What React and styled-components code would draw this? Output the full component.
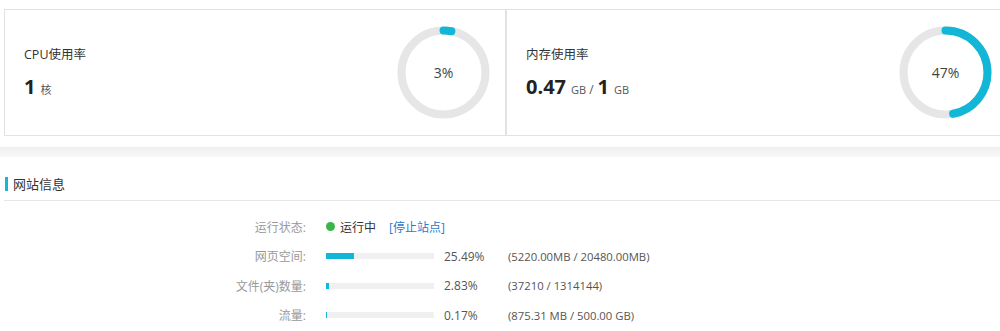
import React from 'react';
import styled, { createGlobalStyle } from 'styled-components';

const GlobalStyle = createGlobalStyle`
  html, body {
    margin: 0;
    padding: 0;
    background: #fff;
    overflow: hidden;
  }
  body {
    font-family: "Open Sans", "Noto Sans CJK SC", sans-serif;
    color: #333;
  }
`;

const ACCENT = '#12b6d6';

const Donut = ({ percent }) => {
  const r = 42;
  const c = 2 * Math.PI * r;
  return (
    <Ring>
      <svg width='93' height='93' viewBox='0 0 93 93'>
        <circle cx='46.5' cy='46.5' r={r} fill='none' stroke='#e6e6e6' strokeWidth='8' />
        <circle
          cx='46.5'
          cy='46.5'
          r={r}
          fill='none'
          stroke={ACCENT}
          strokeWidth='8'
          strokeLinecap='round'
          strokeDasharray={`${(c * percent) / 100} ${c}`}
          transform='rotate(-90 46.5 46.5)'
        />
      </svg>
      <RingLabel>{percent}%</RingLabel>
    </Ring>
  );
};

const UsageBar = ({ percent, text, detail }) => (
  <BarLine>
    <Track>
      <Fill style={{ width: `${Math.max(percent, 1)}%` }} />
    </Track>
    <Percent>{text}</Percent>
    <Detail>{detail}</Detail>
  </BarLine>
);

const App = () => {
  return (
    <>
      <GlobalStyle />
      <Top>
        <Card>
          <Stat>
            <StatTitle>CPU使用率</StatTitle>
            <StatValue>
              <Big>1</Big>
              <Unit>核</Unit>
            </StatValue>
          </Stat>
          <Donut percent={3} />
        </Card>
        <Card>
          <Stat>
            <StatTitle>内存使用率</StatTitle>
            <StatValue>
              <Big>0.47</Big>
              <Unit>GB</Unit>
              <Slash>/</Slash>
              <Big>1</Big>
              <Unit>GB</Unit>
            </StatValue>
          </Stat>
          <Donut percent={47} />
        </Card>
      </Top>
      <Shade />
      <Section>
        <SectionHead>网站信息</SectionHead>
        <InfoGrid>
          <Label>运行状态:</Label>
          <Value>
            <Dot />
            <span>运行中</span>
            <Link href='#'>[停止站点]</Link>
          </Value>
          <Label>网页空间:</Label>
          <Value>
            <UsageBar percent={25.49} text='25.49%' detail='(5220.00MB / 20480.00MB)' />
          </Value>
          <Label>文件(夹)数量:</Label>
          <Value>
            <UsageBar percent={2.83} text='2.83%' detail='(37210 / 1314144)' />
          </Value>
          <Label>流量:</Label>
          <Value>
            <UsageBar percent={0.17} text='0.17%' detail='(875.31 MB / 500.00 GB)' />
          </Value>
        </InfoGrid>
      </Section>
    </>
  );
};

export default App;

const Top = styled.div`
  display: flex;
  width: 1010px;
  padding: 9px 0 11px 4px;
`;

const Card = styled.div`
  box-sizing: border-box;
  width: 502px;
  height: 127px;
  border: 1px solid #e2e2e2;
  display: flex;
  align-items: center;
  justify-content: space-between;
  padding: 0 15px 0 19px;
`;

const Stat = styled.div`
  display: flex;
  flex-direction: column;
  margin-top: 1px;
`;

const StatTitle = styled.div`
  font-size: 12.5px;
  color: #333;
  line-height: 18px;
`;

const StatValue = styled.div`
  display: flex;
  align-items: baseline;
  margin-top: 12px;
  line-height: 22px;
`;

const Big = styled.span`
  font-size: 20px;
  font-weight: 700;
  color: #222;
`;

const Unit = styled.span`
  font-size: 11px;
  color: #555;
  margin-left: 5px;
`;

const Slash = styled.span`
  font-size: 12px;
  color: #555;
  margin: 0 4px 0 3px;
`;

const Ring = styled.div`
  position: relative;
  width: 93px;
  height: 93px;
  svg {
    display: block;
  }
`;

const RingLabel = styled.div`
  position: absolute;
  inset: 0;
  display: flex;
  align-items: center;
  justify-content: center;
  font-size: 14px;
  color: #444;
`;

const Shade = styled.div`
  height: 10px;
  background: linear-gradient(#efefef, #f8f8f8);
`;

const Section = styled.div`
  padding: 0 0 0 4px;
`;

const SectionHead = styled.div`
  box-sizing: border-box;
  display: flex;
  align-items: center;
  height: 44px;
  padding-top: 10px;
  border-bottom: 1px solid #e6e6e6;
  font-size: 13px;
  color: #333;
  &::before {
    content: '';
    width: 3px;
    height: 14px;
    background: ${ACCENT};
    margin-right: 5px;
    margin-left: 1px;
  }
`;

const InfoGrid = styled.div`
  display: grid;
  grid-template-columns: 302px 1fr;
  grid-auto-rows: 29.5px;
  column-gap: 20px;
  padding-top: 11px;
  font-size: 12px;
`;

const Label = styled.div`
  display: flex;
  align-items: center;
  justify-content: flex-end;
  color: #999;
`;

const Value = styled.div`
  display: flex;
  align-items: center;
  color: #333;
`;

const Dot = styled.span`
  width: 9px;
  height: 9px;
  border-radius: 50%;
  background: #3ab54a;
  margin-right: 5px;
`;

const Link = styled.a`
  color: #2b7bd0;
  text-decoration: none;
  margin-left: 13px;
`;

const BarLine = styled.div`
  display: flex;
  align-items: center;
`;

const Track = styled.div`
  width: 108px;
  height: 6px;
  background: #f0f0f0;
  margin-right: 10px;
`;

const Fill = styled.div`
  height: 100%;
  background: ${ACCENT};
`;

const Percent = styled.span`
  width: 64px;
  color: #555;
`;

const Detail = styled.span`
  font-size: 11.3px;
  color: #555;
`;
